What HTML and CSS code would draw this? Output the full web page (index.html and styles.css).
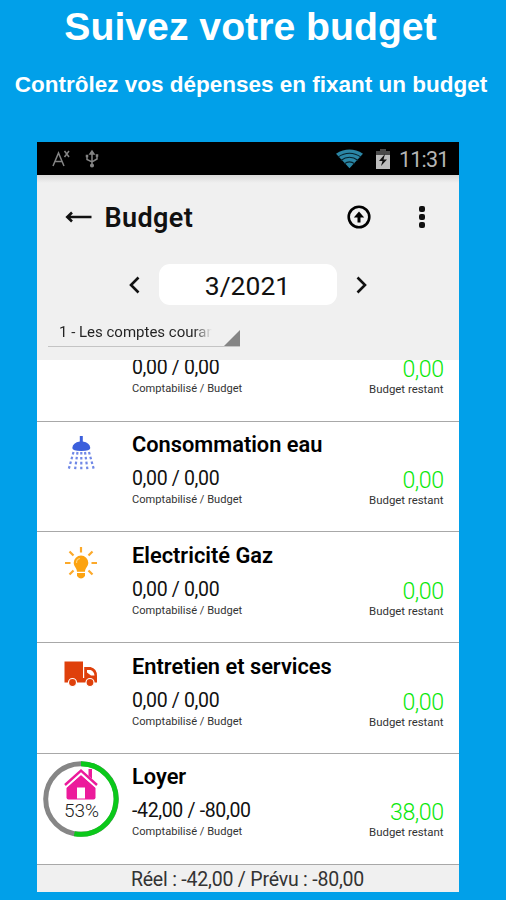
FILE: index.html
```html
<!DOCTYPE html>
<html lang="fr">
<head>
    <meta charset="UTF-8">
    <meta name="viewport" content="width=device-width, initial-scale=1.0">
    <title>Suivez votre budget</title>
    <link rel="stylesheet" href="styles.css">
</head>
<body>
    <h1>Suivez votre budget</h1>
    <p class="subtitle">Contrôlez vos dépenses en fixant un budget</p>

    <div class="phone">
        <div class="status">
            <svg class="status-left" width="50" height="20" viewBox="0 0 50 20" fill="none" stroke="#858585" stroke-width="1.5">
                <path d="M1 17L6.500 4L12 17M3 12.500H10M12.500 2L17 8M17 2L12.500 8"/>
                <path d="M40 3V16M35 7V10.500L40 13L45 10V7"/>
                <path d="M38 5L40 2L42 5ZM34.500 6.500h1v1h-1zM44.500 6h1v1h-1z"/>
                <circle cx="40" cy="16.500" r="1.300" fill="#858585"/>
            </svg>
            <svg class="wifi" width="27" height="20" viewBox="0 0 28 20">
                <path d="M0 4.500Q14 -4 28 4.500L14 19.500Z" fill="#2b86a5"/>
                <path d="M2 8Q14 0 26 8M5 11.500Q14 5 23 11.500M8.500 15Q14 11 19.500 15" fill="none" stroke="#06212b" stroke-width="1.100"/>
            </svg>
            <svg class="battery" width="14" height="22" viewBox="0 0 14 22">
                <path d="M4 1H10V3H14V7H0V3H4Z" fill="#4a4a4a"/>
                <path d="M0 7H14V21H0Z" fill="#bdbdbd"/>
                <path d="M9 6L3 13H6.500L5 18L11 11.500H7.500Z" fill="#111"/>
            </svg>
            <span class="clock">11:31</span>
        </div>

        <div class="header">
            <div class="toolbar">
                <svg width="27" height="14" viewBox="0 0 27 14" fill="none" stroke="#111" stroke-width="2.600">
                    <path d="M26.500 7H3M7 2.500L2.300 7L7 11.500"/>
                </svg>
                <h2>Budget</h2>
                <svg class="upload" width="24" height="24" viewBox="0 0 24 24" fill="none" stroke="#000" stroke-width="2.600">
                    <circle cx="12" cy="12" r="10.300"/>
                    <path d="M12 17.500V9" stroke-width="3"/>
                    <path d="M6.800 12.500L12 6.500L17.200 12.500Z" fill="#000" stroke="none"/>
                </svg>
                <svg class="more" width="8" height="24" viewBox="0 0 8 24" fill="#111">
                    <rect x="1" y="1" width="6" height="6" rx="2"/>
                    <rect x="1" y="9" width="6" height="6" rx="2"/>
                    <rect x="1" y="17" width="6" height="6" rx="2"/>
                </svg>
            </div>

            <div class="month">
                <svg width="12" height="18" viewBox="0 0 12 18" fill="none" stroke="#111" stroke-width="2.600">
                    <path d="M10.500 1.500L3 9L10.500 16.500"/>
                </svg>
                <span class="month-value">3/2021</span>
                <svg width="12" height="18" viewBox="0 0 12 18" fill="none" stroke="#111" stroke-width="2.600">
                    <path d="M1.500 1.500L9 9L1.500 16.500"/>
                </svg>
            </div>

            <div class="account">
                <span class="account-name">1 - Les comptes couran</span>
                <svg width="16" height="16" viewBox="0 0 16 16"><path d="M16 0V16H0Z" fill="#858585"/></svg>
            </div>
        </div>

        <div class="list">
            <!-- scrolled under the header: only the amounts stay visible -->
            <div class="row row-cut">
                <div class="info">
                    <div class="amount">0,00 / 0,00</div>
                    <small>Comptabilisé / Budget</small>
                </div>
                <div class="rest">
                    <div class="left">0,00</div>
                    <small>Budget restant</small>
                </div>
            </div>

            <div class="row">
                <svg class="icon" viewBox="0 0 76 76">
                    <path d="M36.800 6h3v5.500q7 1 7.500 6.500q0 3-9 3t-9-3q.5-5.500 7.500-6.500z" fill="#3c60dc"/>
                    <g fill="none" stroke="#7088e6" stroke-width="2.200" stroke-dasharray="2.600 2.300">
                        <path d="M30.500 22L25.500 40M34.500 22L32 40M38.300 22V40M42 22L44.500 40M46 22L51 40"/>
                    </g>
                </svg>
                <div class="info">
                    <h3>Consommation eau</h3>
                    <div class="amount">0,00 / 0,00</div>
                    <small>Comptabilisé / Budget</small>
                </div>
                <div class="rest">
                    <div class="left">0,00</div>
                    <small>Budget restant</small>
                </div>
            </div>

            <div class="row">
                <svg class="icon" viewBox="0 0 76 76">
                    <g fill="#fca311">
                        <path d="M38 15.500a7.300 7.300 0 0 1 7.300 7.300c0 4-3.300 5-3.300 9h-8c0-4-3.300-5-3.300-9a7.300 7.300 0 0 1 7.300-7.300z"/>
                        <path d="M34 33h8v3q-4 5-8 0z"/>
                    </g>
                    <path d="M38 7V12.500M22 23H27.500M48.500 23H54M26.500 11.500L30.500 15.500M49.500 11.500L45.500 15.500M26.500 34.500L30.500 30.500M49.500 34.500L45.500 30.500" stroke="#fca92a" stroke-width="2.200"/>
                    <path d="M33.500 23q0-4 3.500-4.500" fill="none" stroke="#ffd27a" stroke-width="1.200"/>
                </svg>
                <div class="info">
                    <h3>Electricité Gaz</h3>
                    <div class="amount">0,00 / 0,00</div>
                    <small>Comptabilisé / Budget</small>
                </div>
                <div class="rest">
                    <div class="left">0,00</div>
                    <small>Budget restant</small>
                </div>
            </div>

            <div class="row">
                <svg class="icon" viewBox="0 0 76 76">
                    <path d="M21.500 10.500H40V31.500H21.500zM39 27H42V31.500H39zM41.200 16H47.500Q54 17.500 54 25V31.500H41.200z" fill="#df400b"/>
                    <path d="M44 19H47.500Q51 20 51.500 24.500H48L44 21.500z" fill="#fff"/>
                    <g fill="#df400b" stroke="#fff" stroke-width="1.200">
                        <circle cx="29.500" cy="31.500" r="4"/>
                        <circle cx="47" cy="31.500" r="4"/>
                    </g>
                </svg>
                <div class="info">
                    <h3>Entretien et services</h3>
                    <div class="amount">0,00 / 0,00</div>
                    <small>Comptabilisé / Budget</small>
                </div>
                <div class="rest">
                    <div class="left">0,00</div>
                    <small>Budget restant</small>
                </div>
            </div>

            <div class="row">
                <svg class="icon icon-ring" viewBox="0 0 76 76">
                    <circle cx="38" cy="38" r="35.300" fill="none" stroke="#868686" stroke-width="5"/>
                    <path d="M38 2.700A35.300 35.300 0 1 1 31.300 72.700" fill="none" stroke="#0bc81a" stroke-width="5"/>
                    <path d="M23.500 26.500L38 14L52.500 26.500V36.500Q52.500 38.500 50.500 38.500H25.500Q23.500 38.500 23.500 36.500z" fill="#ec1a9b"/>
                    <path d="M45.500 8H49V18L45.500 15z" fill="#ec1a9b"/>
                    <path d="M22 25.500L38 11L54 25.500" fill="none" stroke="#fff" stroke-width="4"/>
                    <path d="M22 24L38 9.500L54 24" fill="none" stroke="#ec1a9b" stroke-width="2.400"/>
                    <path d="M34 26.500H42V37.500H34z" fill="#fff"/>
                    <text class="percent" x="38.500" y="55.500" text-anchor="middle">53%</text>
                </svg>
                <div class="info">
                    <h3>Loyer</h3>
                    <div class="amount">-42,00 / -80,00</div>
                    <small>Comptabilisé / Budget</small>
                </div>
                <div class="rest">
                    <div class="left">38,00</div>
                    <small>Budget restant</small>
                </div>
            </div>
        </div>

        <div class="total">Réel : -42,00 / Prévu : -80,00</div>
    </div>
</body>
</html>
```
FILE: styles.css
```css
* {
    box-sizing: border-box;
}
body {
    margin: 0;
    height: 900px;
    overflow: hidden;
    background: #01a0e9;
    font-family: Roboto, sans-serif;
    color: #111;
}
h1, h2, h3, p {
    margin: 0;
    white-space: nowrap;
}
h1 {
    padding-top: 4px;
    padding-right: 5px;
    height: 70px;
    line-height: 46px;
    font-family: "Liberation Sans", Arial, sans-serif;
    font-size: 39.200px;
    text-align: center;
    color: #fff;
}
.subtitle {
    height: 72px;
    padding-right: 4px;
    line-height: 30px;
    font-family: "Liberation Sans", Arial, sans-serif;
    font-size: 22.500px;
    font-weight: bold;
    text-align: center;
    color: #fff;
}
.phone {
    width: 422px;
    height: 750px;
    margin-left: 36.500px;
    display: flex;
    flex-direction: column;
    background: #fff;
}
.status {
    flex: none;
    height: 33px;
    display: flex;
    align-items: center;
    padding: 0 10px 0 15px;
    background: #000;
}
.status-left {
    margin-right: auto;
}
.wifi {
    margin-right: 13px;
}
.battery {
    margin-right: 9px;
}
.clock {
    padding-top: 1px;
    font-size: 21.500px;
    letter-spacing: -0.8px;
    color: #b5b5b5;
}
.header {
    flex: none;
    height: 185px;
    background: linear-gradient(#d8d8d8, #f0f0f0 8px);
}
.toolbar {
    height: 84px;
    display: flex;
    align-items: center;
    padding: 0 33px 0 28px;
}
.toolbar h2 {
    margin-left: 13px;
    padding-top: 2px;
    font-size: 27px;
    font-weight: 600;
    letter-spacing: 0.4px;
}
.upload {
    margin-left: auto;
}
.more {
    margin-left: 47px;
}
.month {
    height: 51px;
    display: flex;
    justify-content: center;
    align-items: center;
    gap: 19px;
}
.month-value {
    width: 178px;
    height: 41px;
    border-radius: 11px;
    background: #fff;
    font-size: 26.500px;
    line-height: 43px;
    text-align: center;
}
.account {
    width: 192px;
    height: 27px;
    margin: 10px 0 0 11.500px;
    padding-left: 11px;
    display: flex;
    justify-content: space-between;
    align-items: flex-end;
    border-bottom: 1px solid #c4c4c4;
}
.account-name {
    width: 153px;
    height: 23px;
    overflow: hidden;
    white-space: nowrap;
    font-size: 15px;
    color: transparent;
    background: linear-gradient(to right, #222 88%, #f0f0f0);
    background-clip: text;
    -webkit-background-clip: text;
}
.list {
    flex: none;
    height: 504.500px;
    overflow: hidden;
}
.row {
    height: 110.750px;
    display: flex;
    padding: 0 15px 0 6.500px;
    border-bottom: 1px solid #a8a8a8;
}
.row-cut {
    height: 61.500px;
    padding-left: 95.500px;
}
.row-cut .info,
.row-cut .rest {
    padding-top: 0;
    margin-top: -6px;
}
.icon {
    width: 76px;
    height: 76px;
    margin: 8px 13px 0 0;
}
.icon-ring {
    margin-top: 7px;
}
.percent {
    font-size: 19px;
    font-weight: 300;
    fill: #222;
}
.info {
    padding-top: 9.500px;
}
.info h3 {
    height: 34px;
    line-height: 28px;
    font-size: 21.800px;
    font-weight: 600;
    color: #000;
}
.amount {
    height: 27px;
    line-height: 28px;
    font-size: 19.500px;
    letter-spacing: -0.35px;
}
small {
    display: block;
    line-height: 16px;
    font-size: 11.100px;
    color: #333;
}
.rest {
    margin-left: auto;
    padding-top: 43.500px;
    text-align: right;
}
.rest small {
    font-size: 11.400px;
}
.left {
    height: 27px;
    line-height: 31px;
    font-size: 23.200px;
    letter-spacing: -0.5px;
    font-weight: 350;
    color: #0be80b;
}
.total {
    height: 27.500px;
    line-height: 29px;
    background: #f0f0f0;
    font-size: 19.500px;
    letter-spacing: -0.2px;
    text-align: center;
    color: #333;
}
```
